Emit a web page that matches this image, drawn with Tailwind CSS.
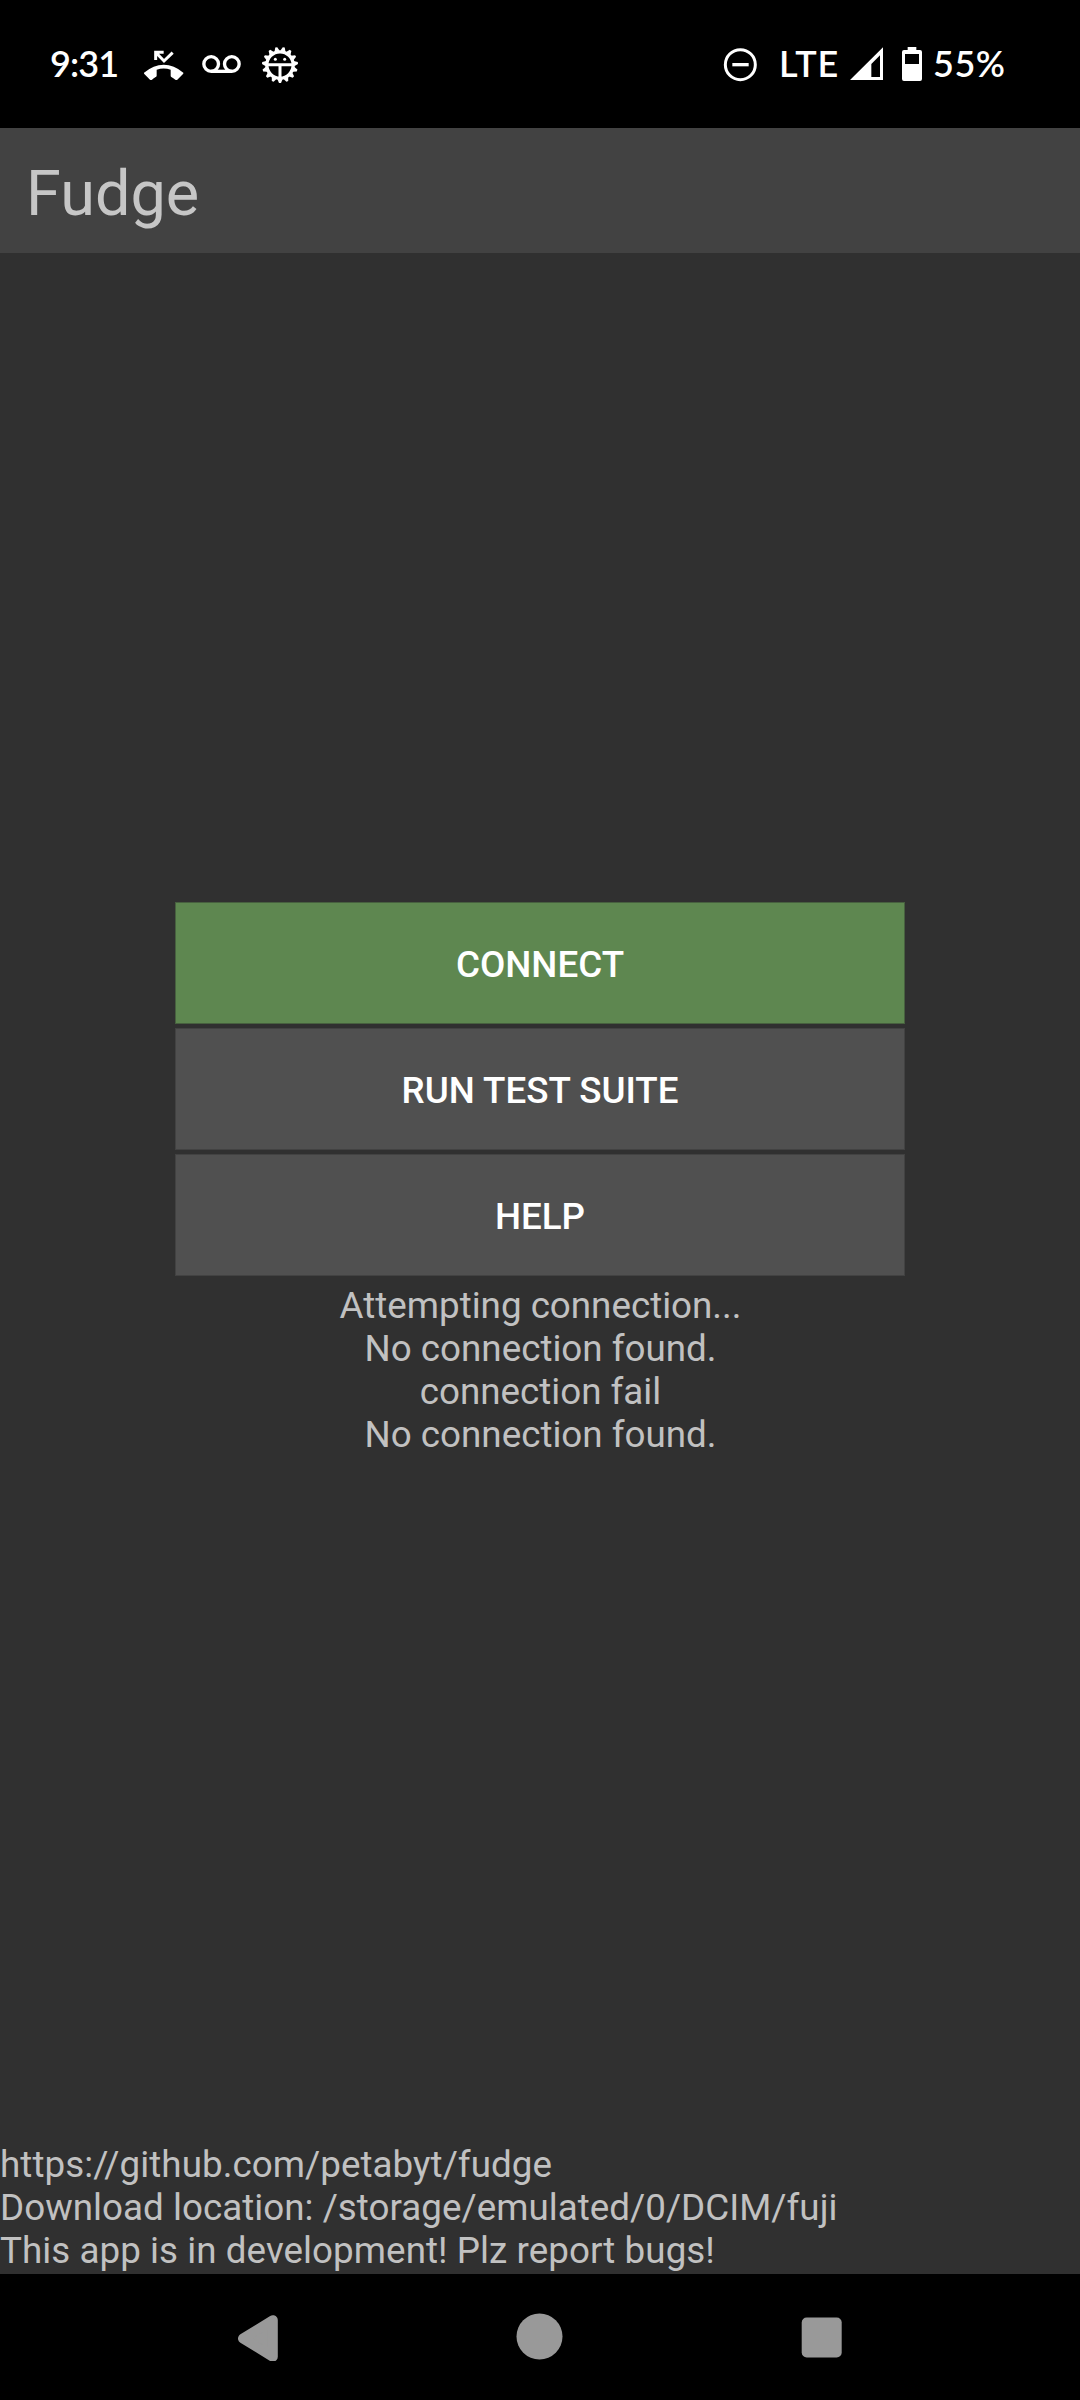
<!DOCTYPE html>
<html lang="en">
<head>
<meta charset="utf-8">
<meta name="viewport" content="width=1080">
<title>Fudge</title>
<script src="https://cdn.jsdelivr.net/npm/@tailwindcss/browser@4"></script>
</head>
<body class="flex h-[2400px] w-[1080px] flex-col overflow-hidden bg-[#303030] font-[Roboto,sans-serif] text-[36.75px] leading-[43px] text-[#c1c1c1]">

<!-- Status bar -->
<div class="flex h-32 shrink-0 items-center justify-between bg-black pr-[74px] pl-[50px] font-[Lato,sans-serif] text-[36px] text-white">
  <div class="flex items-center">
    <span class="w-[94px] pb-0.5 font-semibold tracking-[-0.9px]">9:31</span>
    <svg class="h-10 w-10" viewBox="342 42 120 120" fill="currentColor">
      <path d="M342 128Q371 104 401 104Q432 104 460 128Q461 130 459 132L442 149Q439 151 436 149Q430 144 424 141Q422 140 422 137V119Q401 112 380 119V137Q380 140 377 141Q371 144 366 149Q363 151 360 149L343 132Q341 130 342 128Z"/>
      <path d="M377 90V67H401M379 69L402 93L428 68" fill="none" stroke="currentColor" stroke-width="9"/>
    </svg>
    <svg class="ml-[18px] h-10 w-10" viewBox="516 42 120 120" fill="none" stroke="currentColor" stroke-width="10">
      <circle cx="543.500" cy="102" r="22"/><circle cx="605.500" cy="102" r="22"/><path d="M543 124H606"/>
    </svg>
    <svg class="ml-[18px] h-10 w-10" viewBox="690 42 120 120" fill="none" stroke="currentColor">
      <circle cx="750" cy="105" r="39.500" stroke-width="10"/>
      <g fill="currentColor" stroke="none">
        <path id="tooth" d="M742 147L747 159H753L758 147Z"/>
        <use href="#tooth" transform="rotate(24 750 105)"/>
        <use href="#tooth" transform="rotate(48 750 105)"/>
        <use href="#tooth" transform="rotate(72 750 105)"/>
        <use href="#tooth" transform="rotate(96 750 105)"/>
        <use href="#tooth" transform="rotate(120 750 105)"/>
        <use href="#tooth" transform="rotate(144 750 105)"/>
        <use href="#tooth" transform="rotate(168 750 105)"/>
        <use href="#tooth" transform="rotate(192 750 105)"/>
        <use href="#tooth" transform="rotate(216 750 105)"/>
        <use href="#tooth" transform="rotate(240 750 105)"/>
        <use href="#tooth" transform="rotate(264 750 105)"/>
        <use href="#tooth" transform="rotate(288 750 105)"/>
        <use href="#tooth" transform="rotate(312 750 105)"/>
        <use href="#tooth" transform="rotate(336 750 105)"/>
        <circle cx="736" cy="88" r="4.500"/><circle cx="764" cy="88" r="4.500"/>
      </g>
      <path d="M711 104H789M750 104V144" stroke-width="9"/>
    </svg>
  </div>
  <div class="flex items-center">
    <svg class="h-10 w-9" viewBox="69 42 108 120" fill="none" stroke="currentColor" stroke-width="9">
      <circle cx="121" cy="104" r="45"/><path d="M97 104H146" stroke-width="10"/>
    </svg>
    <span class="ml-5 w-[71px] pb-0.5 font-semibold tracking-[0.9px]">LTE</span>
    <svg class="h-10 w-[33px]" viewBox="450 42 99 120" fill="currentColor">
      <path fill-rule="evenodd" d="M450 150L549 52V150ZM514 141H540V76L514 102Z"/>
    </svg>
    <svg class="ml-[19px] h-10 w-5" viewBox="606 42 60 120" fill="currentColor">
      <path fill-rule="evenodd" d="M623 51H649V60H660Q666 60 666 66V147Q666 153 660 153H612Q606 153 606 147V66Q606 60 612 60H623ZM615 72V102H657V72Z"/>
    </svg>
    <span class="ml-[11px] w-[73px] pb-0.5 font-semibold tracking-[0.5px]">55%</span>
  </div>
</div>

<!-- Title bar -->
<header class="flex h-[125px] shrink-0 items-center bg-[#424242] px-[26px] pt-1.5">
  <h1 class="text-[63px] leading-[74px] text-[#c6c6c6]">Fudge</h1>
</header>

<main class="flex min-h-0 flex-1 flex-col">
  <div class="flex flex-1 flex-col items-center pt-[649px]">
    <div class="flex w-[730px] flex-col gap-1 font-medium text-white">
      <button class="h-[122px] border border-[#47603f] bg-[#5e8750] pt-0.5">CONNECT</button>
      <button class="h-[122px] border border-[#424242] bg-[#505050] pt-0.5">RUN TEST SUITE</button>
      <button class="h-[122px] border border-[#424242] bg-[#505050] pt-0.5">HELP</button>
    </div>
    <div class="pt-2 pl-px text-center">
      <p>Attempting connection...</p>
      <p>No connection found.</p>
      <p>connection fail</p>
      <p>No connection found.</p>
    </div>
  </div>
  <footer class="pb-[2px] tracking-[0.06px]">
    <p>https://github.com/petabyt/fudge</p>
    <p class="tracking-[0.03px]">Download location: /storage/emulated/0/DCIM/fuji</p>
    <p>This app is in development! Plz report bugs!</p>
  </footer>
</main>

<!-- Navigation bar -->
<nav class="flex h-[126px] shrink-0 items-center bg-black pl-[237px] text-[#999999]">
  <svg class="h-12 w-[42px]" viewBox="0 0 42 48" fill="currentColor" stroke="currentColor" stroke-width="10" stroke-linejoin="round">
    <path d="M6 25.500L35.800 7.200V43.800Z"/>
  </svg>
  <svg class="ml-[237px] h-12 w-12" viewBox="0 0 48 48" fill="currentColor"><circle cx="23.500" cy="23.500" r="23"/></svg>
  <svg class="ml-[237px] h-12 w-12" viewBox="0 0 48 48" fill="currentColor"><rect x="0.700" y="4.500" width="40" height="40" rx="5"/></svg>
</nav>
</body>
</html>
